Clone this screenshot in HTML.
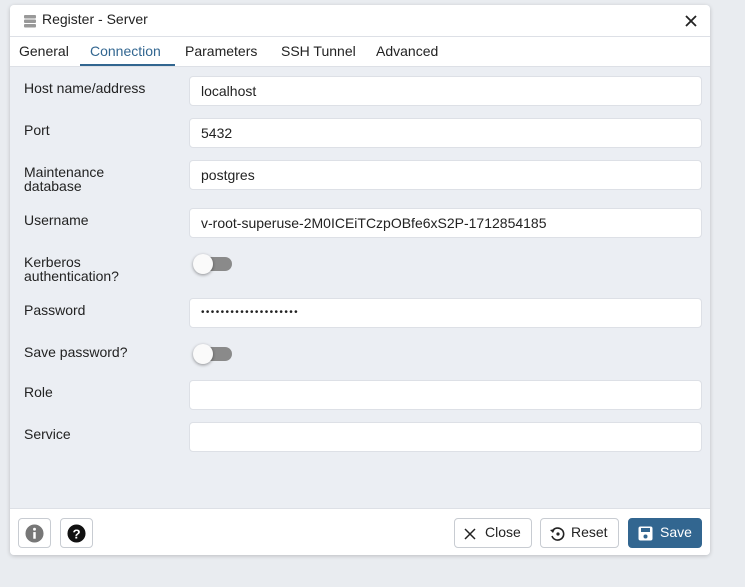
<!DOCTYPE html>
<html><head><style>
*{box-sizing:border-box;margin:0;padding:0}
body{width:745px;height:587px;background:#e9ecf0;font-family:"Liberation Sans",sans-serif;position:relative;overflow:hidden;color:#222}
.dlg{position:absolute;left:10px;top:5px;width:700px;height:550px;background:#ebeef3;border-radius:4px;box-shadow:0 1px 4px rgba(0,0,0,.2);overflow:hidden}
.title{position:absolute;left:0;top:0;width:700px;height:32px;background:#fff;border-bottom:1px solid #dde0e6}
.title span{position:absolute;left:32px;top:6px;font-size:14px;color:#222}
.tabs{position:absolute;left:0;top:32px;width:700px;height:30px;background:#fff;border-bottom:1px solid #dde0e6}
.tab{position:absolute;top:6px;font-size:14px;color:#222}
.lbl{position:absolute;left:14px;font-size:14px;line-height:14px;color:#222}
.inp{position:absolute;left:179px;width:513px;height:30px;background:#fff;border:1px solid #dde0e6;border-radius:4px;font-size:14px;padding:6px 11px;color:#222}
.tg{position:absolute;left:185px;width:37px;height:14px;background:#8a8a8a;border-radius:7px}
.tg i{position:absolute;left:-2px;top:-3px;width:20px;height:20px;border-radius:50%;background:#fafafa;box-shadow:0 1px 3px rgba(0,0,0,.4)}
.foot{position:absolute;left:0;top:503px;width:700px;height:47px;background:#fff;border-top:1px solid #dde0e6}
.btn{position:absolute;top:9px;height:30px;border:1px solid #c8ccd2;border-radius:4px;background:#fff;font-size:14px;color:#222}
</style></head><body>
<div class="dlg">
 <div class="title">
  <svg style="position:absolute;left:13px;top:9px" width="14" height="14" viewBox="0 0 14 14"><rect x="1" y="1" width="12" height="3.5" rx="1" fill="#999"/><rect x="1" y="5.5" width="12" height="3.5" rx="1" fill="#999"/><rect x="1" y="10" width="12" height="3.5" rx="1" fill="#999"/></svg>
  <span>Register - Server</span>
  <svg style="position:absolute;left:675px;top:10px" width="12" height="12" viewBox="0 0 12 12"><path d="M1 1L11 11M11 1L1 11" stroke="#222" stroke-width="1.8"/></svg>
 </div>
 <div class="tabs">
  <span class="tab" style="left:9px">General</span>
  <span class="tab" style="left:80px;color:#326690">Connection</span>
  <div style="position:absolute;left:70px;top:27px;width:95px;height:2px;background:#326690"></div>
  <span class="tab" style="left:175px">Parameters</span>
  <span class="tab" style="left:271px">SSH Tunnel</span>
  <span class="tab" style="left:366px">Advanced</span>
 </div>
 <div class="lbl" style="top:76px">Host name/address</div><div class="inp" style="top:71px">localhost</div>
 <div class="lbl" style="top:118px">Port</div><div class="inp" style="top:113px">5432</div>
 <div class="lbl" style="top:160px">Maintenance<br>database</div><div class="inp" style="top:155px">postgres</div>
 <div class="lbl" style="top:208px">Username</div><div class="inp" style="top:203px">v-root-superuse-2M0ICEiTCzpOBfe6xS2P-1712854185</div>
 <div class="lbl" style="top:250px">Kerberos<br>authentication?</div><div class="tg" style="top:252px"><i></i></div>
 <div class="lbl" style="top:298px">Password</div><div class="inp" style="top:293px;font-size:10px;padding-top:8px;letter-spacing:1.4px">••••••••••••••••••••</div>
 <div class="lbl" style="top:340px">Save password?</div><div class="tg" style="top:342px"><i></i></div>
 <div class="lbl" style="top:380px">Role</div><div class="inp" style="top:375px"></div>
 <div class="lbl" style="top:422px">Service</div><div class="inp" style="top:417px"></div>
 <div class="foot">
  <div class="btn" style="left:8px;width:33px"><svg style="position:absolute;left:6px;top:5px" width="19" height="19" viewBox="0 0 20 20"><circle cx="10" cy="10" r="9.5" fill="#777"/><rect x="8.7" y="8.5" width="2.6" height="7" fill="#fff"/><circle cx="10" cy="5.5" r="1.5" fill="#fff"/></svg></div>
  <div class="btn" style="left:50px;width:33px"><svg style="position:absolute;left:6px;top:5px" width="19" height="19" viewBox="0 0 20 20"><circle cx="10" cy="10" r="9.5" fill="#111"/><text x="10" y="15" font-size="14" font-weight="bold" fill="#fff" text-anchor="middle" font-family="Liberation Sans">?</text></svg></div>
  <div class="btn" style="left:444px;width:78px"><svg style="position:absolute;left:9px;top:9px" width="12" height="12" viewBox="0 0 12 12"><path d="M1 1L11 11M11 1L1 11" stroke="#222" stroke-width="1.5"/></svg><span style="position:absolute;left:30px;top:5px">Close</span></div>
  <div class="btn" style="left:530px;width:79px"><svg style="position:absolute;left:8px;top:7px" width="16" height="16" viewBox="0 0 16 16"><path d="M3.5 5A6 6 0 1 1 3 10" fill="none" stroke="#222" stroke-width="1.6"/><path d="M1 4L4 7L6 3Z" fill="#222"/><circle cx="9" cy="8" r="1.6" fill="#222"/></svg><span style="position:absolute;left:30px;top:5px">Reset</span></div>
  <div class="btn" style="left:618px;width:74px;background:#326690;border-color:#326690;color:#fff"><svg style="position:absolute;left:9px;top:7px" width="15" height="15" viewBox="0 0 15 15"><rect x="0.5" y="0.5" width="14" height="14" rx="2" fill="#fff"/><rect x="3" y="2" width="9" height="4" fill="#326690"/><circle cx="7.5" cy="10.5" r="2" fill="#326690"/></svg><span style="position:absolute;left:31px;top:5px">Save</span></div>
 </div>
</div>
</body></html>
